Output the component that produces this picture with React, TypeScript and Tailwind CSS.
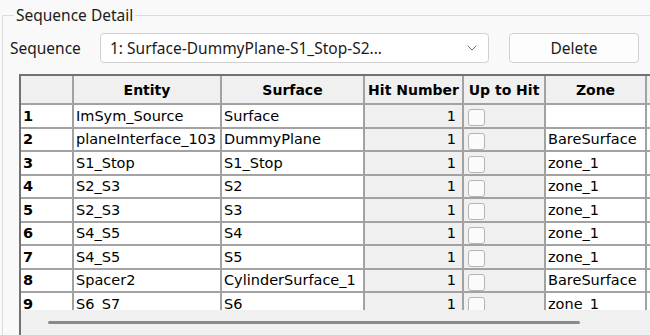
import { ChevronDown } from "lucide-react";

type Row = {
  id: number;
  entity: string;
  surface: string;
  hit: number;
  zone: string;
};

const ROWS: Row[] = [
  { id: 1, entity: "ImSym_Source", surface: "Surface", hit: 1, zone: "" },
  { id: 2, entity: "planeInterface_103", surface: "DummyPlane", hit: 1, zone: "BareSurface" },
  { id: 3, entity: "S1_Stop", surface: "S1_Stop", hit: 1, zone: "zone_1" },
  { id: 4, entity: "S2_S3", surface: "S2", hit: 1, zone: "zone_1" },
  { id: 5, entity: "S2_S3", surface: "S3", hit: 1, zone: "zone_1" },
  { id: 6, entity: "S4_S5", surface: "S4", hit: 1, zone: "zone_1" },
  { id: 7, entity: "S4_S5", surface: "S5", hit: 1, zone: "zone_1" },
  { id: 8, entity: "Spacer2", surface: "CylinderSurface_1", hit: 1, zone: "BareSurface" },
  { id: 9, entity: "S6_S7", surface: "S6", hit: 1, zone: "zone_1" },
];

const HEADERS = ["", "Entity", "Surface", "Hit Number", "Up to Hit", "Zone", ""];

const cell = "flex items-center overflow-hidden whitespace-nowrap";

const App = () => {
  return (
    <div className="flex h-[335px] w-[650px] flex-col overflow-hidden bg-[#f9f9f9] pt-[5px] font-['Noto_Sans',sans-serif] text-[#1b1b1b]">
      <fieldset className="ml-[2px] flex min-h-0 flex-1 flex-col border-l border-t border-[#dcdcdc]">
        <legend className="ml-[11px] px-[2px] text-[15.5px] leading-[21px]">Sequence Detail</legend>

        <div className="mt-[7px] flex items-center">
          <span className="ml-[7px] w-[90px] text-[15.5px] leading-[20px]">Sequence</span>
          <div className="flex h-[30px] w-[389px] items-center justify-between rounded-[4px] border border-[#d0d0d0] bg-white pl-[9px] pr-[8px]">
            <span className="text-[15.5px] leading-[20px]">1: Surface-DummyPlane-S1_Stop-S2...</span>
            <ChevronDown className="h-[16px] w-[16px] text-[#606060]" strokeWidth={1.3} />
          </div>
          <button className="ml-[20px] flex h-[30px] w-[130px] items-center justify-center rounded-[4px] border border-[#d0d0d0] bg-[#fdfdfd] text-[15.5px] leading-[20px]">
            Delete
          </button>
        </div>

        <div className="ml-[16px] mt-[11px] flex min-h-0 flex-1 flex-col overflow-hidden border-l-2 border-t-2 border-[#727272]">
          <div className="min-h-0 flex-1 overflow-hidden">
            <div className="grid w-max grid-cols-[51px_146px_141px_97px_80px_99px_80px] grid-rows-[27px_repeat(9,21.5px)] gap-[2px] bg-[#a2a2a2] font-['DejaVu_Sans',sans-serif] text-[14.5px] leading-[18px] text-black">
              {HEADERS.map((h, i) => (
                <div key={i} className={`${cell} justify-center bg-[#f0f0f0] text-[14px] font-bold`}>
                  {h}
                </div>
              ))}
              {ROWS.map((r) => (
                <Row key={r.id} row={r} />
              ))}
            </div>
          </div>
          <div className="flex h-[25px] shrink-0 items-center bg-[#f0f0f0]">
            <div className="ml-[27px] h-[3px] w-[532px] rounded-full bg-[#8a8a8a]" />
          </div>
        </div>
      </fieldset>
    </div>
  );
};

const Row = ({ row }: { row: Row }) => (
  <>
    <div className={`${cell} bg-white pl-[2px] font-bold`}>{row.id}</div>
    <div className={`${cell} bg-white pl-[2px]`}>{row.entity}</div>
    <div className={`${cell} bg-white pl-[2px]`}>{row.surface}</div>
    <div className={`${cell} justify-end bg-[#f0f0f0] pr-[6px]`}>{row.hit}</div>
    <div className="flex items-start bg-[#f0f0f0] pl-[4px] pt-[4px]">
      <span className="h-[17px] w-[17px] rounded-[3px] border border-[#b4b4b4] bg-[#fbfbfb]" />
    </div>
    <div className={`${cell} bg-white pl-[2px]`}>{row.zone}</div>
    <div className="bg-white" />
  </>
);

export default App;
